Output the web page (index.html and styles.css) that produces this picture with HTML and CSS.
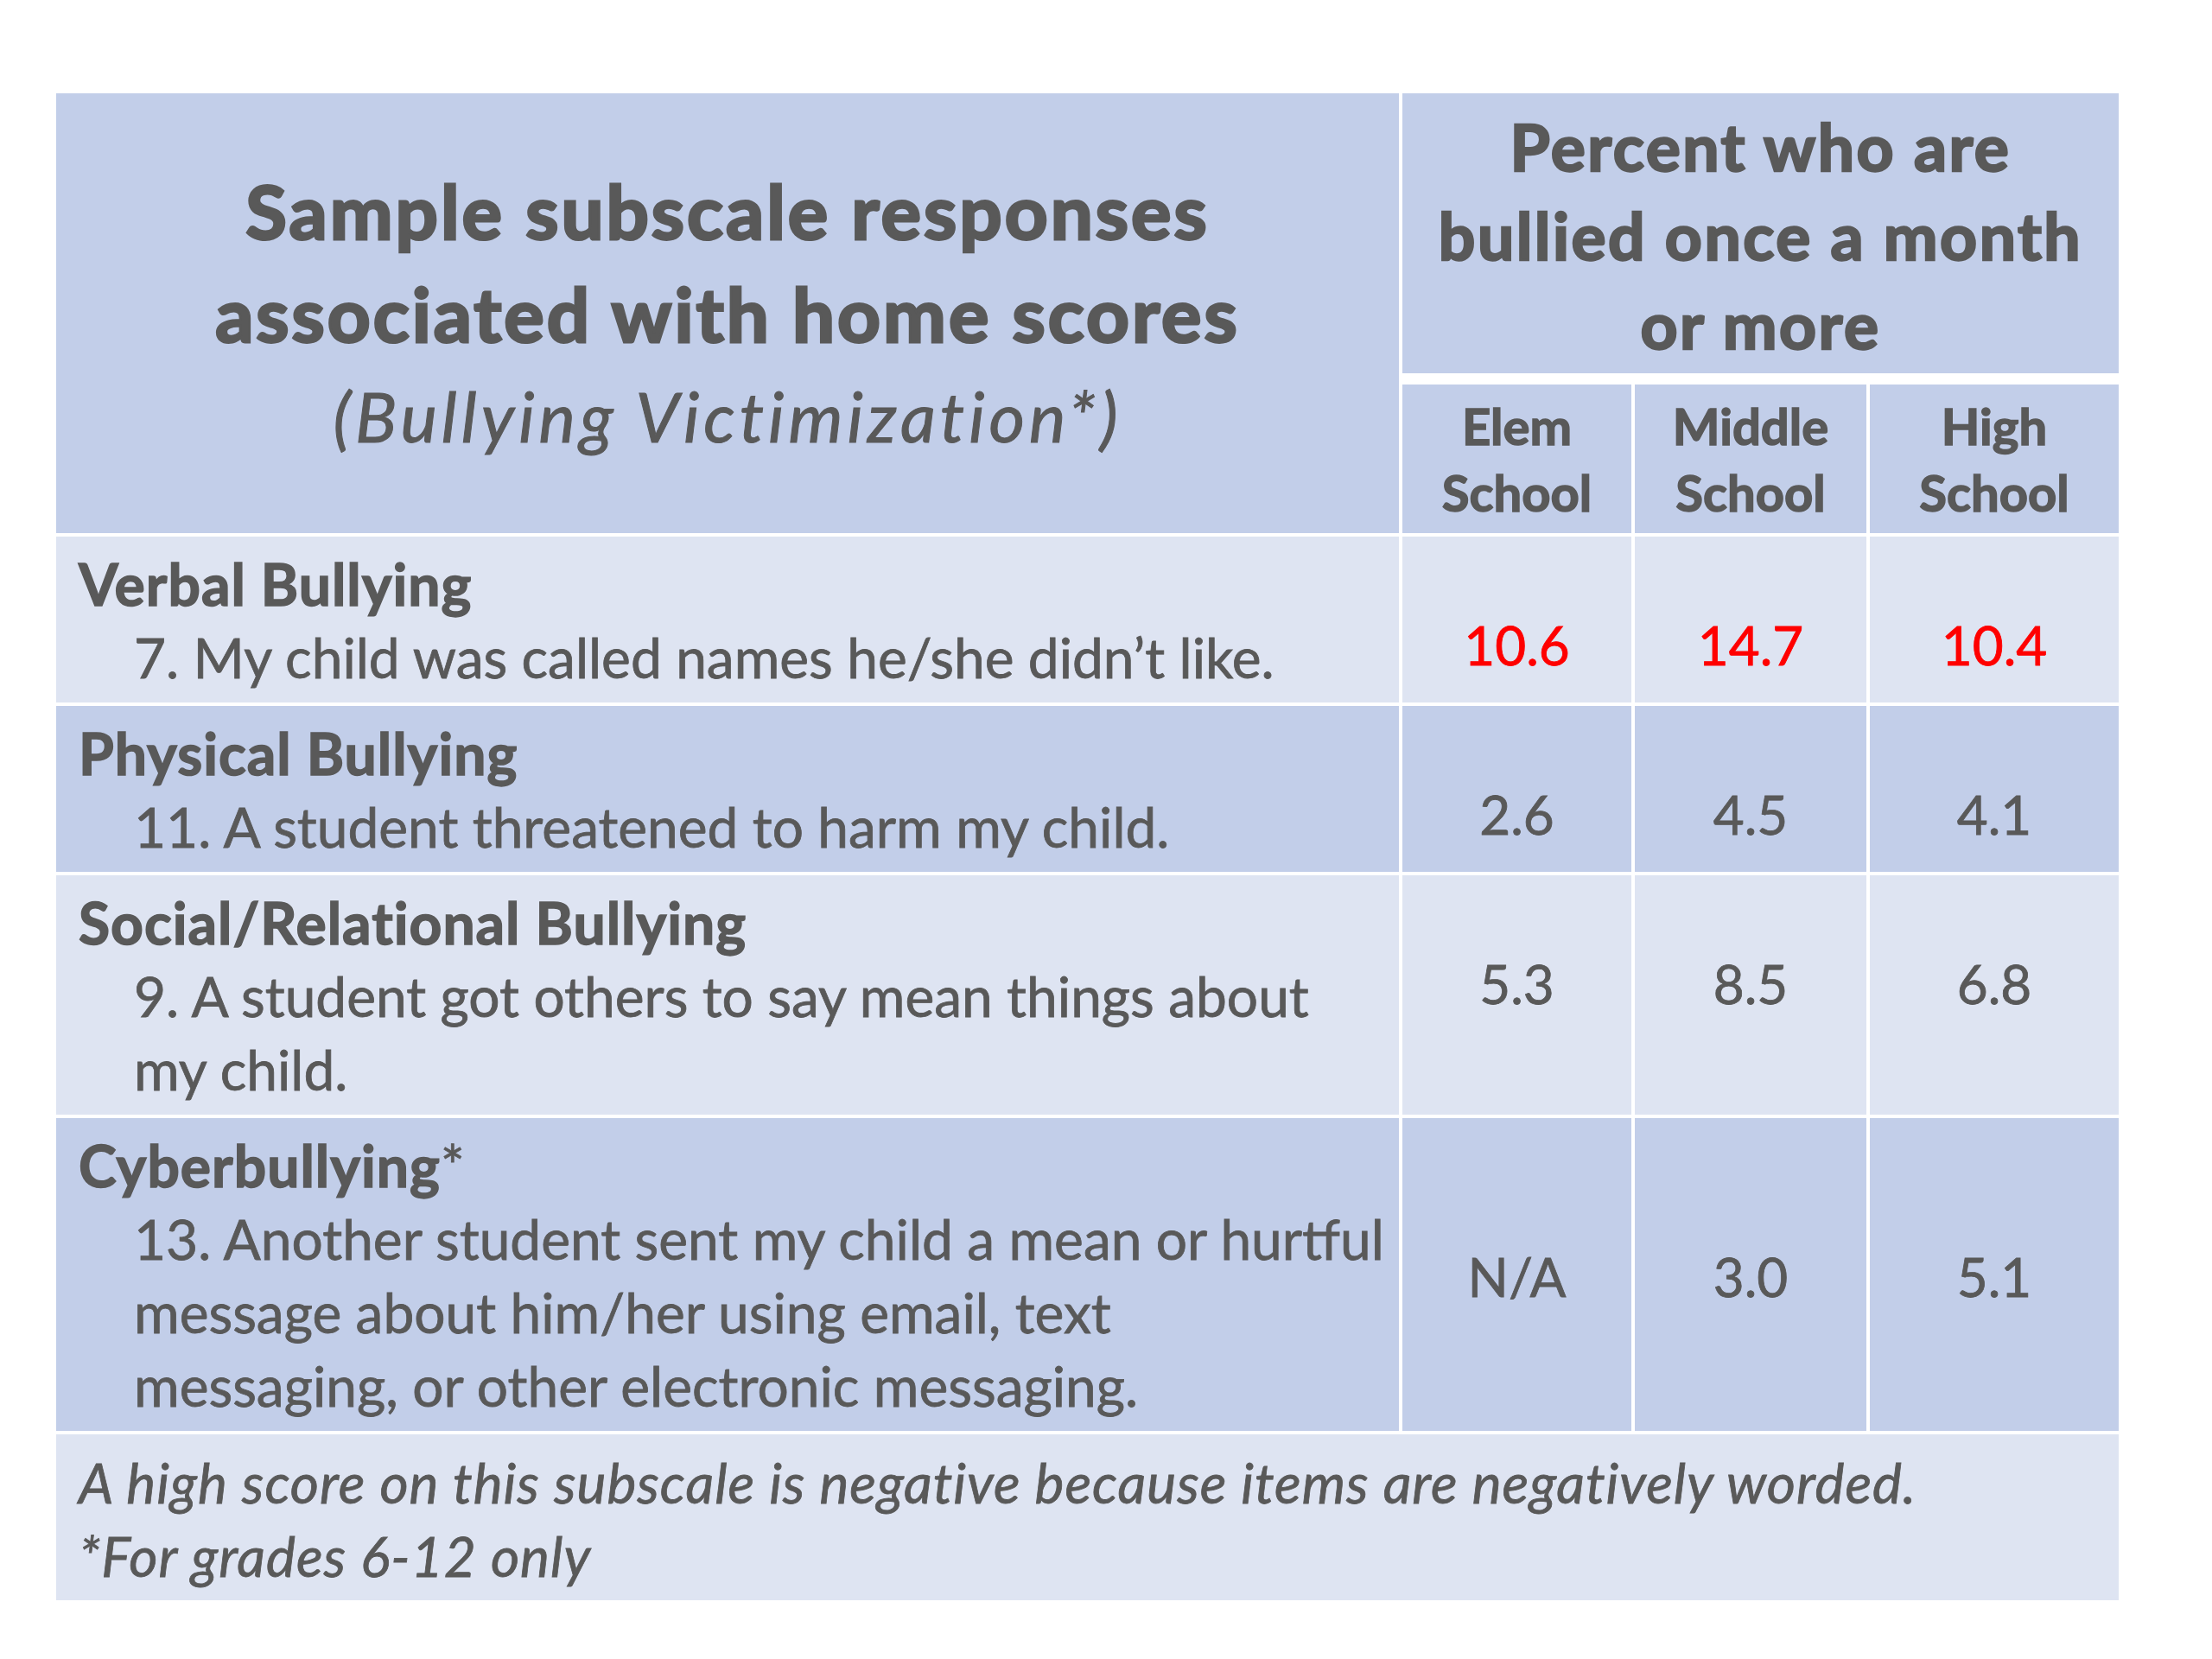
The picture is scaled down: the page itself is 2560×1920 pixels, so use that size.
FILE: index.html
```html
<!DOCTYPE html>
<html lang="en">
<head>
<meta charset="utf-8">
<title>Bullying Victimization – Sample subscale responses</title>
<link rel="stylesheet" href="styles.css">
</head>
<body>
<table class="grid">
  <colgroup>
    <col class="c-item">
    <col class="c-elem">
    <col class="c-mid">
    <col class="c-high">
  </colgroup>
  <thead>
    <tr>
      <th class="h-title" rowspan="2">
        <div class="t-bold">Sample subscale responses</div>
        <div class="t-bold">associated with home scores</div>
        <div class="t-ital">(Bullying Victimization*)</div>
      </th>
      <th class="h-pct" colspan="3">Percent who are<br>bullied once a month<br>or more</th>
    </tr>
    <tr>
      <th class="h-sub">Elem<br>School</th>
      <th class="h-sub">Middle<br>School</th>
      <th class="h-sub">High<br>School</th>
    </tr>
  </thead>
  <tbody>
    <tr class="light">
      <td class="item">
        <div class="scale">Verbal Bullying</div>
        <div class="q">7. My child was called names he/she didn’t like.</div>
      </td>
      <td class="num red">10.6</td>
      <td class="num red">14.7</td>
      <td class="num red">10.4</td>
    </tr>
    <tr class="dark">
      <td class="item">
        <div class="scale">Physical Bullying</div>
        <div class="q">11. A student threatened to harm my child.</div>
      </td>
      <td class="num">2.6</td>
      <td class="num">4.5</td>
      <td class="num">4.1</td>
    </tr>
    <tr class="light">
      <td class="item">
        <div class="scale">Social/Relational Bullying</div>
        <div class="q">9. A student got others to say mean things about<br>my child.</div>
      </td>
      <td class="num">5.3</td>
      <td class="num">8.5</td>
      <td class="num">6.8</td>
    </tr>
    <tr class="dark">
      <td class="item">
        <div class="scale">Cyberbullying<span class="ast">*</span></div>
        <div class="q">13. Another student sent my child a mean or hurtful<br>message about him/her using email, text<br>messaging, or other electronic messaging.</div>
      </td>
      <td class="num low">N/A</td>
      <td class="num low">3.0</td>
      <td class="num low">5.1</td>
    </tr>
    <tr class="light">
      <td class="note" colspan="4">A high score on this subscale is negative because items are negatively worded.<br>*For grades 6-12 only</td>
    </tr>
  </tbody>
</table>
</body>
</html>
```

FILE: styles.css
```css
html, body {
  margin: 0;
  padding: 0;
  background: #ffffff;
}

body {
  font-family: "Lato", "Noto Sans", sans-serif;
  color: #595959;
}

.grid {
  margin: 104px 0 0 61px;
  width: 2395px;
  table-layout: fixed;
  border-collapse: separate;
  border-spacing: 4px;
  background: #ffffff;
}

.c-item { width: 1554px; }
.c-elem { width: 265px; }
.c-mid  { width: 268px; }
.c-high { width: 288px; }

th, td {
  padding: 0;
  box-sizing: border-box;
}

thead th {
  background: #c2cee9;
  color: #595959;
  text-align: center;
  vertical-align: middle;
}

.h-title {
  height: 509px;
  padding-top: 0;
}

.t-bold {
  font-size: 87px;
  font-weight: 700;
  letter-spacing: 3px;
  line-height: 119px;
  -webkit-text-stroke: 3px #595959;
}

.t-ital {
  font-size: 80px;
  font-weight: 400;
  font-style: italic;
  letter-spacing: 5px;
  line-height: 119px;
  -webkit-text-stroke: 1px #595959;
}

.h-pct {
  height: 333px;
  font-size: 75px;
  font-weight: 700;
  letter-spacing: 2.5px;
  line-height: 103px;
  border-bottom: 9px solid #ffffff;
  padding-top: 4px;
  -webkit-text-stroke: 2.5px #595959;
}

.h-sub {
  height: 172px;
  font-size: 58px;
  font-weight: 700;
  line-height: 77px;
  -webkit-text-stroke: 1.5px #595959;
}

tbody td {
  font-size: 64px;
  line-height: 85px;
  vertical-align: top;
  -webkit-text-stroke: 0.8px #595959;
}

.light td { background: #dee4f2; }
.dark td { background: #c2cee9; }

.item {
  padding: 12px 20px 10px 26px;
}

.scale {
  font-size: 66px;
  font-weight: 700;
  letter-spacing: 1px;
  -webkit-text-stroke: 1.5px #595959;
}

.ast {
  font-weight: 400;
  -webkit-text-stroke: 0.8px #595959;
}

.q {
  padding-left: 64px;
  white-space: nowrap;
}

.num {
  font-size: 62px;
  text-align: center;
  padding-top: 83px;
}

.num.low {
  padding-top: 141px;
}

.num.red {
  color: #ff0000;
  -webkit-text-stroke: 0.8px #ff0000;
}

.note {
  height: 192px;
  padding: 13px 26px 0 26px;
  font-style: italic;
  letter-spacing: 1px;
}
```
